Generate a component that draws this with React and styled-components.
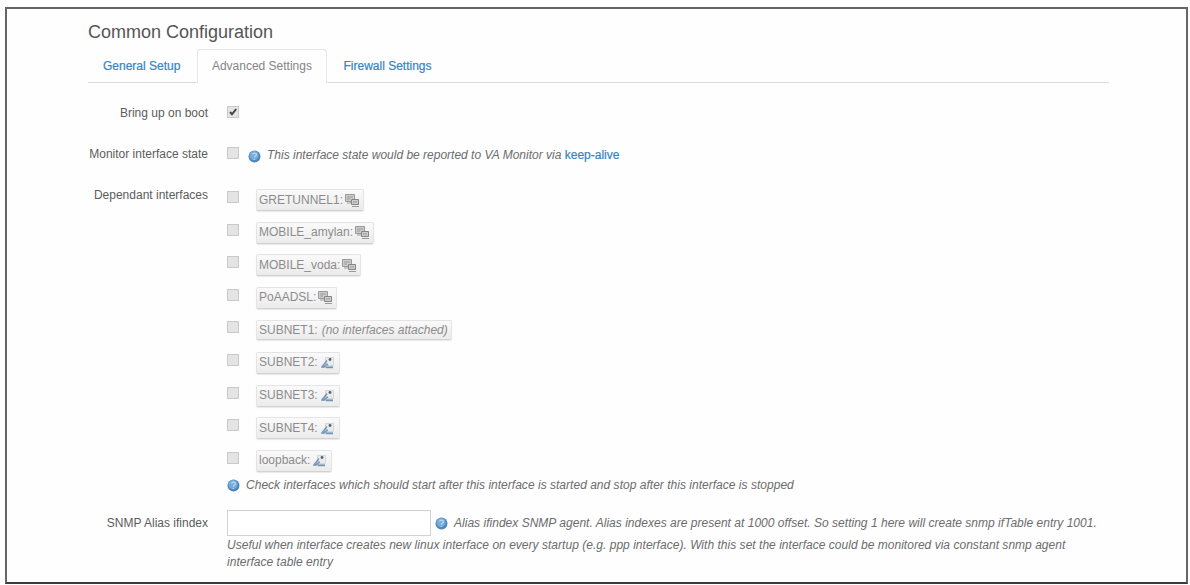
import styled, { createGlobalStyle } from 'styled-components';

const GlobalStyle = createGlobalStyle`
  * {
    box-sizing: border-box;
  }
  body {
    margin: 0;
    background: #fefefe;
    color: #5c5c5c;
    font-family: 'Liberation Sans', Arial, sans-serif;
    font-size: 12px;
    line-height: 17px;
  }
`;

const Frame = styled.div`
  width: 1183px;
  height: 577px;
  margin: 7px 0 0 5px;
  padding: 12px 77px 0 81px;
  border: 2px solid #666;
  border-bottom-color: #3c3c3c;
`;

const Title = styled.h1`
  margin: 0;
  font-size: 18px;
  font-weight: 400;
  line-height: 22px;
  color: #555;
`;

const Tabs = styled.nav`
  display: flex;
  height: 34px;
  margin-top: 6px;
  border-bottom: 1px solid #ddd;
`;

const Tab = styled.a`
  height: 34px;
  padding: 8px 14px 0;
  border: 1px solid ${(props) => (props.$active ? '#e6e6e6' : 'transparent')};
  border-bottom: 0;
  border-radius: 3px 3px 0 0;
  background: ${(props) => (props.$active ? '#fefefe' : 'none')};
  color: ${(props) => (props.$active ? '#858585' : '#3683c2')};
  text-decoration: none;
  white-space: nowrap;
  -webkit-text-stroke: ${(props) => (props.$active ? '0' : '0.2px')};
  & + & {
    margin-left: 1.5px;
  }
`;

const Row = styled.div`
  display: grid;
  grid-template-columns: 120px 1fr;
  column-gap: 19px;
  margin-top: ${(props) => props.$gap}px;
`;

const Label = styled.label`
  padding-top: ${(props) => props.$offset ?? 0}px;
  text-align: right;
  white-space: nowrap;
`;

const Line = styled.div`
  display: flex;
  align-items: center;
  min-height: 17px;
`;

// Checkbox row: the box sits slightly above the text next to it
const CheckLine = styled.div`
  display: flex;
  align-items: flex-start;
  height: 17px;
  padding-top: 1px;
`;

const Box = styled.span`
  display: flex;
  flex: none;
  width: 12px;
  height: 12px;
  border: 1px solid #cacaca;
  background: #e4e4e4;
`;

const Hint = styled.span`
  margin-left: 6px;
  font-style: italic;
  color: #6c6c6c;
  white-space: nowrap;
  letter-spacing: ${(props) => props.$spacing ?? 0}px;
`;

const Link = styled.a`
  color: #3683c2;
  font-style: normal;
  text-decoration: none;
  -webkit-text-stroke: 0.2px;
`;

const InterfaceList = styled.div`
  height: 290px;
`;

const InterfaceRow = styled.div`
  display: flex;
  align-items: flex-start;
  height: 32.6px;
  padding-top: 4px;
`;

const Chip = styled.span`
  display: flex;
  align-items: center;
  height: ${(props) => (props.$flat ? 20 : 22)}px;
  margin: ${(props) => (props.$flat ? -1 : -2)}px 0 0 17px;
  padding: 0 3px 0 2px;
  border: 1px solid #e4e4e4;
  border-bottom-color: #d2d2d2;
  border-radius: 2px;
  background: linear-gradient(#fafafa, #ebebeb);
  box-shadow: 0 1px 1px #e8e8e8;
  color: #8c8c8c;
  white-space: nowrap;
  & svg {
    margin-left: 2px;
  }
  & em {
    margin-left: 4px;
  }
`;

const Input = styled.input`
  width: 204px;
  height: 26px;
  border: 1px solid #d2d2d2;
  background: #fff;
  outline: 0;
`;

const Description = styled.p`
  margin: 1px 0 0;
  font-style: italic;
  color: #6c6c6c;
  white-space: nowrap;
  letter-spacing: 0.025px;
`;

const InfoIcon = styled(({ className }) => (
  <svg className={className} width="13" height="13" viewBox="0 0 13 13">
    <circle cx="6.5" cy="6.5" r="6" fill="#4c87bd" />
    <circle cx="6" cy="5.5" r="4.5" fill="#79abd8" />
    <path
      d="M4.6 4.6c.2-2.2 4-1.9 3.7.2-.2 1.2-1.6 1.3-1.9 2.8M6.2 9v1"
      fill="none"
      stroke="#b9d7f1"
      strokeWidth="1.3"
    />
  </svg>
))`
  flex: none;
  margin-left: ${(props) => props.$gap ?? 0}px;
  margin-top: ${(props) => props.$top ?? 0}px;
`;

function Check() {
  return (
    <svg width="10" height="10" viewBox="0 0 10 10">
      <path d="M2 5l2 2.3L8.2 2" fill="none" stroke="#444" strokeWidth="2" />
    </svg>
  );
}

function TunnelIcon() {
  return (
    <svg width="15" height="15" viewBox="0 0 15 15">
      <path d="M.5 1.500h9v7h-9z" fill="#ccc" stroke="#999" />
      <path d="M2 4h6M2 6h3M2 10h4" stroke="#999" />
      <path d="M6.500 6.500h7v5h-7z" fill="#ccc" stroke="#858585" />
      <path d="M8 9h4M7 13.500h7" stroke="#999" />
    </svg>
  );
}

function EthernetIcon() {
  return (
    <svg width="16" height="15" viewBox="0 0 16 15">
      <path d="M5.500 2.500h8v8h-8z" fill="#e9ecef" stroke="#d3d6da" />
      <path d="M1 13l5-6 2 2-2 2h7v2z" fill="#b5c3d2" />
      <path
        d="M1.500 12.500L7 5.500M3 12.500l5-3.500M6 12.500h7"
        fill="none"
        stroke="#7394b5"
        strokeWidth="1.300"
      />
      <circle cx="10" cy="4.500" r="1.400" fill="#5c6064" />
    </svg>
  );
}

const interfaces = [
  { name: 'GRETUNNEL1', type: 'tunnel' },
  { name: 'MOBILE_amylan', type: 'tunnel' },
  { name: 'MOBILE_voda', type: 'tunnel' },
  { name: 'PoAADSL', type: 'tunnel' },
  { name: 'SUBNET1', type: 'none' },
  { name: 'SUBNET2', type: 'ethernet' },
  { name: 'SUBNET3', type: 'ethernet' },
  { name: 'SUBNET4', type: 'ethernet' },
  { name: 'loopback', type: 'ethernet' },
];

export default function App() {
  return (
    <>
      <GlobalStyle />
      <Frame>
        <Title>Common Configuration</Title>
        <Tabs>
          <Tab>General Setup</Tab>
          <Tab $active>Advanced Settings</Tab>
          <Tab>Firewall Settings</Tab>
        </Tabs>
        <Row $gap={22}>
          <Label>Bring up on boot</Label>
          <CheckLine>
            <Box>
              <Check />
            </Box>
          </CheckLine>
        </Row>
        <Row $gap={24}>
          <Label>Monitor interface state</Label>
          <CheckLine>
            <Box />
            <InfoIcon $gap={9} $top={3} />
            <Hint>
              This interface state would be reported to VA Monitor via{' '}
              <Link>keep-alive</Link>
            </Hint>
          </CheckLine>
        </Row>
        <Row $gap={24}>
          <Label>Dependant interfaces</Label>
          <div>
            <InterfaceList>
              {interfaces.map((item) => (
                <InterfaceRow key={item.name}>
                  <Box />
                  <Chip $flat={item.type === 'none'}>
                    {item.name}:
                    {item.type === 'tunnel' && <TunnelIcon />}
                    {item.type === 'ethernet' && <EthernetIcon />}
                    {item.type === 'none' && <em>(no interfaces attached)</em>}
                  </Chip>
                </InterfaceRow>
              ))}
            </InterfaceList>
            <Line>
              <InfoIcon />
              <Hint $spacing={0.02}>
                Check interfaces which should start after this interface is
                started and stop after this interface is stopped
              </Hint>
            </Line>
          </div>
        </Row>
        <Row $gap={16}>
          <Label $offset={5}>SNMP Alias ifindex</Label>
          <div>
            <Line>
              <Input />
              <InfoIcon $gap={4} />
              <Hint $spacing={0.02}>
                Alias ifindex SNMP agent. Alias indexes are present at 1000
                offset. So setting 1 here will create snmp ifTable entry 1001.
              </Hint>
            </Line>
            <Description>
              Useful when interface creates new linux interface on every startup
              (e.g. ppp interface). With this set the interface could be
              monitored via constant snmp agent
              <br />
              interface table entry
            </Description>
          </div>
        </Row>
      </Frame>
    </>
  );
}
